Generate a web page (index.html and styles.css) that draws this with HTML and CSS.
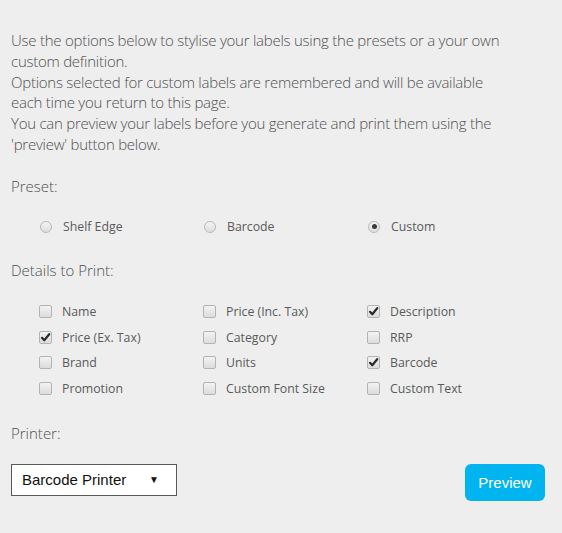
FILE: index.html
```html
<!DOCTYPE html>
<html>
<head>
<meta charset="utf-8">
<link rel="stylesheet" href="styles.css">
</head>
<body>
<div class="page">
  <p class="intro">Use the options below to stylise your labels using the presets or a your own custom definition.<br>Options selected for custom labels are remembered and will be available each time you return to this page.<br>You can preview your labels before you generate and print them using the 'preview' button below.</p>

  <h2 class="heading">Preset:</h2>
  <div class="options radios">
    <label class="opt"><span class="radio"></span>Shelf Edge</label>
    <label class="opt"><span class="radio"></span>Barcode</label>
    <label class="opt"><span class="radio on"></span>Custom</label>
  </div>

  <h2 class="heading details">Details to Print:</h2>
  <div class="options checks">
    <label class="opt"><span class="box"></span>Name</label>
    <label class="opt"><span class="box"></span>Price (Inc. Tax)</label>
    <label class="opt"><span class="box on"><svg viewBox="0 0 13 13" width="13" height="13"><path d="M3 6.8 L5.3 9.3 L10.2 3.2" fill="none" stroke="#2b2b2b" stroke-width="2.2" stroke-linecap="round" stroke-linejoin="round"/></svg></span>Description</label>
    <label class="opt"><span class="box on"><svg viewBox="0 0 13 13" width="13" height="13"><path d="M3 6.8 L5.3 9.3 L10.2 3.2" fill="none" stroke="#2b2b2b" stroke-width="2.2" stroke-linecap="round" stroke-linejoin="round"/></svg></span>Price (Ex. Tax)</label>
    <label class="opt"><span class="box"></span>Category</label>
    <label class="opt"><span class="box"></span>RRP</label>
    <label class="opt"><span class="box"></span>Brand</label>
    <label class="opt"><span class="box"></span>Units</label>
    <label class="opt"><span class="box on"><svg viewBox="0 0 13 13" width="13" height="13"><path d="M3 6.8 L5.3 9.3 L10.2 3.2" fill="none" stroke="#2b2b2b" stroke-width="2.2" stroke-linecap="round" stroke-linejoin="round"/></svg></span>Barcode</label>
    <label class="opt"><span class="box"></span>Promotion</label>
    <label class="opt"><span class="box"></span>Custom Font Size</label>
    <label class="opt"><span class="box"></span>Custom Text</label>
  </div>

  <h2 class="heading printer">Printer:</h2>
  <div class="actions">
    <div class="select">
      <span class="select-text">Barcode Printer</span>
      <span class="select-arrow">&#9660;</span>
    </div>
    <button class="preview" type="button">Preview</button>
  </div>
</div>
</body>
</html>
```

FILE: styles.css
```css
html, body {
  margin: 0;
  padding: 0;
  background: #eeeeee;
}
body {
  font-family: "Open Sans", "DejaVu Sans", sans-serif;
  color: #555555;
}
.page {
  padding: 30px 11px 0 11px;
}
.intro {
  margin: 0;
  max-width: 498px;
  font-size: 15px;
  font-weight: 300;
  line-height: 20.8px;
  letter-spacing: -0.25px;
  color: #505050;
}
.heading {
  margin: 21px 0 0 0;
  font-size: 15px;
  font-weight: 300;
  line-height: 21px;
  color: #505050;
}
.heading.details {
  margin-top: 23px;
}
.heading.printer {
  margin-top: 22px;
}
.options {
  display: grid;
  grid-template-columns: 164px 164px 164px;
  padding-left: 28px;
}
.radios {
  margin-top: 20px;
  grid-auto-rows: 20px;
}
.checks {
  margin-top: 18px;
  grid-auto-rows: 25.5px;
}
.opt {
  display: flex;
  align-items: center;
  font-size: 12.3px;
  color: #5a5a5a;
}
.radio {
  box-sizing: border-box;
  width: 12px;
  height: 12px;
  margin-left: 1px;
  margin-right: 11px;
  border-radius: 50%;
  border: 1px solid #b9b9b9;
  background: linear-gradient(#f4f4f4, #dedede);
  position: relative;
}
.radio.on::after {
  content: "";
  position: absolute;
  left: 2.5px;
  top: 2.5px;
  width: 5px;
  height: 5px;
  border-radius: 50%;
  background: #3a3a3a;
}
.box {
  box-sizing: border-box;
  width: 13px;
  height: 13px;
  margin-right: 10px;
  border-radius: 2px;
  border: 1px solid #b3b3b3;
  background: linear-gradient(#f3f3f3, #dcdcdc);
  display: flex;
  align-items: center;
  justify-content: center;
  overflow: visible;
}
.box svg {
  display: block;
  flex: none;
}
.actions {
  margin-top: 20px;
  display: flex;
  justify-content: space-between;
  align-items: flex-start;
  padding-right: 6px;
}
.select {
  box-sizing: border-box;
  width: 166px;
  height: 32px;
  border: 1px solid #595959;
  background: #ffffff;
  display: flex;
  align-items: center;
  justify-content: space-between;
  padding: 0 17px 0 10px;
  font-family: "Liberation Sans", Arial, sans-serif;
  font-size: 15px;
  color: #111111;
}
.select-arrow {
  font-size: 10px;
  color: #111111;
}
.preview {
  box-sizing: border-box;
  width: 80px;
  height: 37px;
  border: none;
  border-radius: 6px;
  background: #00b4f0;
  color: #ffffff;
  font-family: "Liberation Sans", Arial, sans-serif;
  font-size: 15px;
  padding: 0;
  cursor: pointer;
}
```
